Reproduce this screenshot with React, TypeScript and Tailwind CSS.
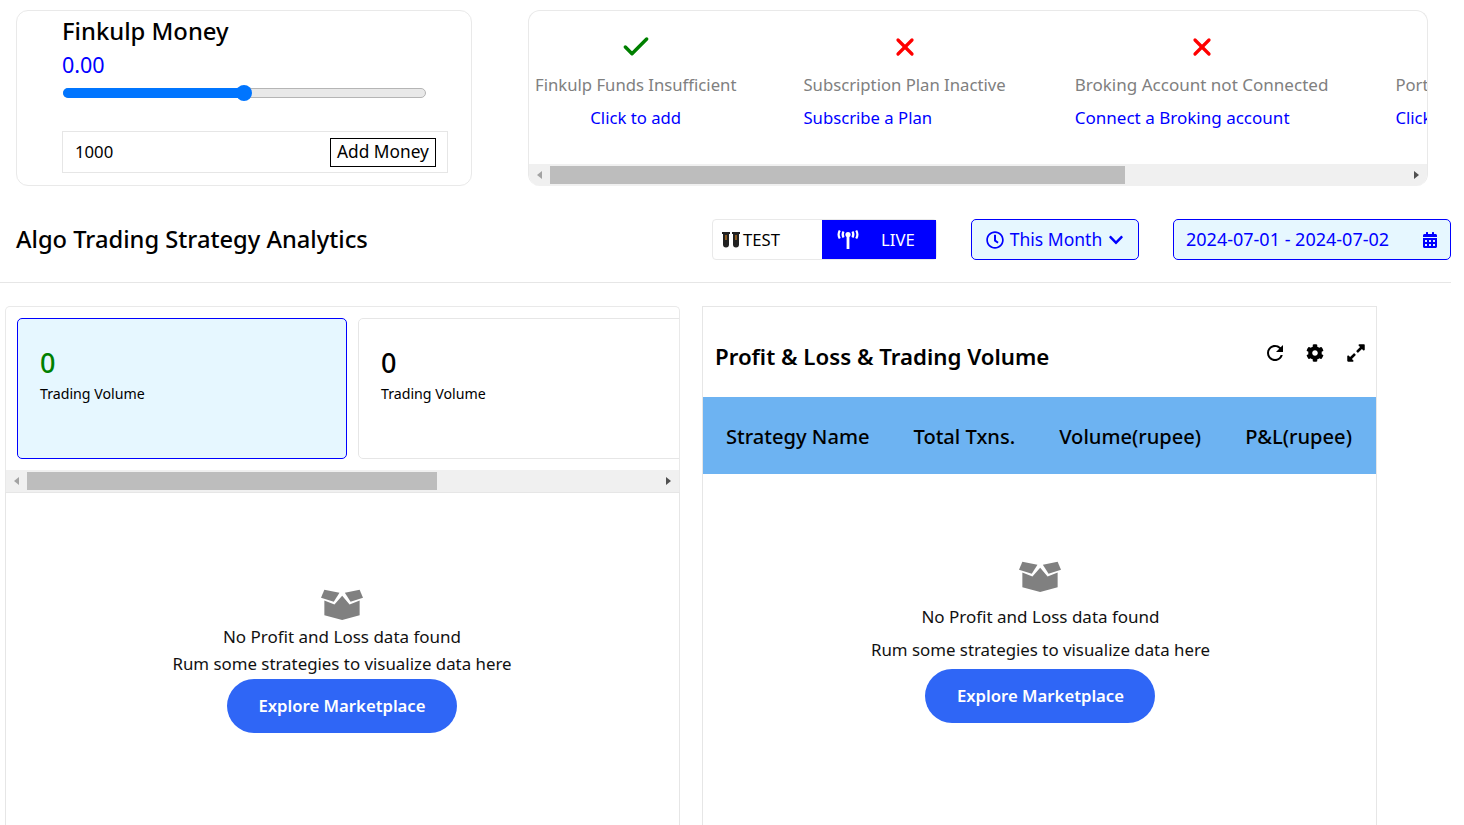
import React from "react";
import { FaRegClock, FaChevronDown, FaCalendarAlt, FaCog, FaExpandAlt } from "react-icons/fa";
import { MdRefresh } from "react-icons/md";
import { Check, X } from "lucide-react";

function BoxIcon() {
  return (
    <svg width="42" height="31" viewBox="65 40 125 92" fill="#808080">
      <path d="M75 42 L120 51 L103 78 L65 66 Z" />
      <path d="M180 42 L136 51 L153 78 L190 66 Z" />
      <path d="M75 74 L105 86 L128 60 L150 86 L180 74 L180 118 L128 132 L75 118 Z" />
    </svg>
  );
}

function Tubes() {
  return (
    <svg width="19" height="16" viewBox="0 0 19 16">
      {[0, 10].map((x) => (
        <g key={x} transform={`translate(${x} 0)`}>
          <rect x="0" y="0" width="8" height="2" fill="#222" />
          <path d="M1 2 H7 V12.5 A3 3 0 0 1 1 12.5 Z" fill="#222" />
          <rect x="3" y="3" width="2" height="5" fill="#8a5a20" />
        </g>
      ))}
    </svg>
  );
}

function Antenna() {
  return (
    <svg width="22" height="19" viewBox="0 0 22 19" fill="none" stroke="#fff">
      <circle cx="11" cy="4.5" r="2.6" fill="#fff" stroke="none" />
      <path d="M11 5 V19" strokeWidth="2.8" />
      <path d="M6.5 1.5 Q4.8 4.5 6.5 7.5 M15.5 1.5 Q17.2 4.5 15.5 7.5" strokeWidth="2.2" />
      <path d="M2.8 0.5 Q0.4 4.5 2.8 8.5 M19.2 0.5 Q21.6 4.5 19.2 8.5" strokeWidth="2.2" />
    </svg>
  );
}

function Status({
  ok,
  label,
  link,
  center,
  box = "",
  size = "text-[16.7px]",
}: {
  ok?: boolean;
  label: string;
  link: string;
  center?: boolean;
  box?: string;
  size?: string;
}) {
  return (
    <div className={`flex shrink-0 flex-col ${center ? "items-center" : "items-start"} ${box}`}>
      <div className="flex h-[23px] w-full items-center justify-center">
        {ok ? (
          <Check size={32} strokeWidth={2.6} color="#008000" />
        ) : (
          <X size={28} strokeWidth={2.8} color="#ff0000" />
        )}
      </div>
      <div className={`mt-[15px] h-[24px] whitespace-nowrap leading-[24px] text-[#808080] ${size}`}>{label}</div>
      <div className={`mt-[9px] h-[24px] whitespace-nowrap leading-[24px] text-[#0000ff] ${size}`}>{link}</div>
    </div>
  );
}

function Bar({ thumbClass }: { thumbClass: string }) {
  return (
    <div className="flex h-[22px] shrink-0 items-center bg-[#f0f0f0]">
      <div className="flex w-[21px] shrink-0 justify-center">
        <div className="h-0 w-0 border-y-[4px] border-r-[5px] border-y-transparent border-r-[#a3a3a3]" />
      </div>
      <div className={`h-[18px] shrink-0 bg-[#bdbdbd] ${thumbClass}`} />
      <div className="flex-1" />
      <div className="flex w-[22px] shrink-0 justify-center">
        <div className="h-0 w-0 border-y-[4px] border-l-[5px] border-y-transparent border-l-[#505050]" />
      </div>
    </div>
  );
}

function Metric({ green, active }: { green?: boolean; active?: boolean }) {
  return (
    <div
      className={`h-[141px] w-[330px] shrink-0 rounded-[5px] border pl-[22px] pt-[25px] ${
        active ? "border-[#0000ff] bg-[#e6f7ff]" : "border-[#e6e6e6] bg-white"
      }`}
    >
      <div className={`text-[27px] leading-[38px] font-medium ${green ? "text-[#008000]" : "text-black"}`}>0</div>
      <div className="mt-[2px] text-[14.2px] leading-[20px] text-black">Trading Volume</div>
    </div>
  );
}

function Empty({ first, second, third }: { first: string; second: string; third: string }) {
  return (
    <div className="flex flex-col items-center">
      <BoxIcon />
      <div className={`${first} text-[17px] leading-[24px] text-[#111]`}>No Profit and Loss data found</div>
      <div className={`${second} text-[16.85px] leading-[24px] text-[#111]`}>Rum some strategies to visualize data here</div>
      <button className={`${third} flex h-[54px] w-[230px] items-center justify-center rounded-full bg-[#2f66f6] text-[16.7px] font-semibold text-white`}>
        Explore Marketplace
      </button>
    </div>
  );
}

export default function App() {
  return (
    <div
      className="h-[825px] w-[1464px] overflow-hidden bg-white text-black"
      style={{ fontFamily: '"Noto Sans", "Open Sans", Arial, sans-serif' }}
    >
      {/* top */}
      <div className="flex gap-[56px] pl-[16px] pt-[10px]">
        <div className="h-[176px] w-[456px] shrink-0 rounded-[12px] border border-[#e9e9e9] pl-[45px] pt-[3px]">
          <div className="text-[23.8px] leading-[34px] font-medium">Finkulp Money</div>
          <div className="mt-[2px] text-[21.5px] leading-[30px] text-[#0000ff]">0.00</div>
          <div className="relative ml-px mt-[8px] h-[10px] w-[363px] rounded-full border border-[#b5b5b5] bg-[#e9e9e9]">
            <div className="absolute -left-px -top-px h-[10px] w-[182px] rounded-full bg-[#0075ff]" />
            <div className="absolute left-[172px] top-[-4px] h-[16px] w-[16px] rounded-full bg-[#0075ff]" />
          </div>
          <div className="mt-[33px] flex h-[42px] w-[386px] items-center justify-between border border-[#e6e6e6] pl-[12px] pr-[11px]">
            <span className="text-[16.7px] leading-[24px]">1000</span>
            <span className="flex h-[29px] w-[106px] items-center justify-center border-[1.5px] border-black text-[17.3px] leading-[24px]">
              Add Money
            </span>
          </div>
        </div>

        <div className="flex h-[176px] w-[900px] shrink-0 flex-col overflow-hidden rounded-[12px] border border-b-0 border-[#e9e9e9]">
          <div className="flex flex-1 gap-[67px] overflow-hidden pl-[6px] pt-[24px]">
            <Status ok center label="Finkulp Funds Insufficient" link="Click to add" />
            <Status label="Subscription Plan Inactive" link="Subscribe a Plan" />
            <Status box="ml-[2px]" size="text-[17.05px]" label="Broking Account not Connected" link="Connect a Broking account" />
            <Status box="w-[200px]" label="Portfolio" link="Click" />
          </div>
          <Bar thumbClass="w-[575px]" />
        </div>
      </div>

      {/* header */}
      <div className="mt-[33px] flex h-[41px] w-[1451px] items-center pl-[16px]">
        <div className="mb-[2px] text-[23.7px] leading-[34px] font-medium">Algo Trading Strategy Analytics</div>
        <div className="ml-auto flex items-center">
          <div className="flex h-[41px] w-[225px] rounded-[4px] border border-[#e9e9e9]">
            <div className="flex flex-1 items-center gap-[2px] pl-[9px] text-[16.7px]">
              <Tubes />
              <span>TEST</span>
            </div>
            <div className="flex w-[114px] items-center gap-[22px] bg-[#0000ff] pl-[15px] text-[16.7px] text-white">
              <Antenna />
              <span>LIVE</span>
            </div>
          </div>
          <div className="ml-[34px] flex h-[41px] w-[168px] items-center justify-center gap-[6px] rounded-[5px] border border-[#0000ff] bg-[#e6f7ff] text-[17.5px] text-[#0000ff]">
            <FaRegClock size={18} />
            <span>This Month</span>
            <FaChevronDown size={16} />
          </div>
          <div className="ml-[34px] flex h-[41px] w-[278px] items-center justify-between rounded-[5px] border border-[#0000ff] bg-[#e6f7ff] pl-[12px] pr-[12px] text-[18px] text-[#0000ff]">
            <span>2024-07-01 - 2024-07-02</span>
            <FaCalendarAlt size={16} />
          </div>
        </div>
      </div>
      <div className="mt-[22px] h-px w-[1451px] bg-[#e6e6e6]" />

      {/* panels */}
      <div className="mt-[23px] flex gap-[22px] pl-[5px]">
        <div className="flex w-[675px] shrink-0 flex-col">
          <div className="flex h-[186px] flex-col overflow-hidden rounded-t-[5px] border border-b-0 border-[#e9e9e9]">
            <div className="flex flex-1 gap-[11px] overflow-hidden pl-[11px] pt-[11px]">
              <Metric green active />
              <Metric />
            </div>
            <Bar thumbClass="w-[410px]" />
          </div>
          <div className="flex h-[340px] flex-col items-center border border-[#e6e6e6] pr-[1px] pt-[96px]">
            <Empty first="mt-[5px]" second="mt-[3px]" third="mt-[3px]" />
          </div>
        </div>

        <div className="flex h-[530px] w-[675px] shrink-0 flex-col border border-[#e6e6e6]">
          <div className="flex h-[90px] items-center justify-between pl-[12px] pr-[10px] pt-[10px]">
            <div className="text-[22.25px] font-semibold leading-[32px]">Profit &amp; Loss &amp; Trading Volume</div>
            <div className="mb-[8px] flex items-center gap-[22px]">
              <MdRefresh size={24} className="-mr-[3px]" />
              <FaCog size={18} />
              <FaExpandAlt size={20} />
            </div>
          </div>
          <div className="flex h-[77px] items-center gap-[44px] bg-[#6db3f2] pl-[23px] pt-[3px] text-[20.1px] font-medium">
            <span>Strategy Name</span>
            <span>Total Txns.</span>
            <span>Volume(rupee)</span>
            <span>P&amp;L(rupee)</span>
          </div>
          <div className="flex flex-1 flex-col items-center pl-[2px] pt-[87px]">
            <Empty first="mt-[13px]" second="mt-[9px]" third="mt-[7px]" />
          </div>
        </div>
      </div>
    </div>
  );
}
